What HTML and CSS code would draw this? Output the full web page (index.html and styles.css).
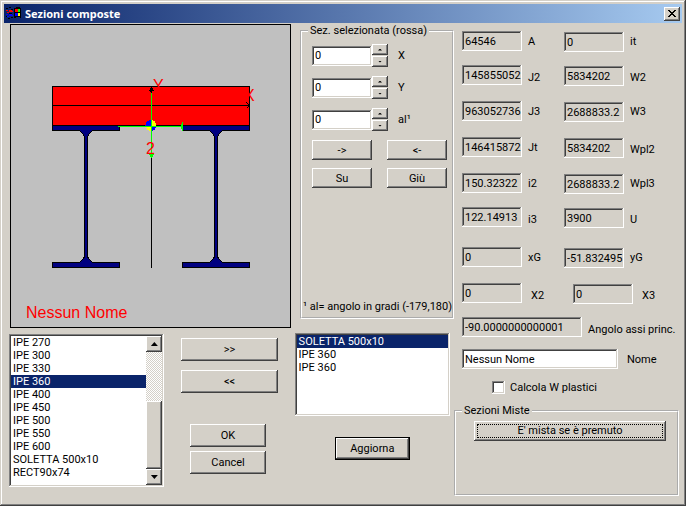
FILE: index.html
```html
<!DOCTYPE html>
<html lang="it">
<head>
<meta charset="utf-8">
<title>Sezioni composte</title>
<link rel="stylesheet" href="styles.css">
</head>
<body>
<main class="window">
  <header class="titlebar">
    <svg class="app-icon" viewBox="0 0 16 14" aria-hidden="true" shape-rendering="crispEdges">
      <path fill="#000" d="M8 1h2V0h4v1h1v10h-1v-1h-4v1H8zM0 1h2v1H0zM3 0h2v1H3zM5 2h2v1H5zM0 9h2v1H0zM2 11h2v1H2zM5 10h2v1H5zM3 6h3v1H3z"/>
      <path fill="#f00" d="M9 2h3v3H9zM0 3h2v1H0zM3 3h3v2H3zM1 5h2v1H1zM6 4h1v1H6z"/>
      <path fill="#0f0" d="M12 2h2v3h-2z"/>
      <path fill="#00f" d="M9 6h3v3H9zM0 7h2v1H0zM3 7h3v2H3zM1 9h2v1H1zM6 8h1v1H6z"/>
      <path fill="#ff0" d="M12 6h2v3h-2z"/>
    </svg>
    <h1>Sezioni composte</h1>
    <button class="close" type="button" aria-label="Chiudi">
      <svg viewBox="0 0 8 7" aria-hidden="true" shape-rendering="crispEdges"><path d="M0 0h2v1h1v1h2V1h1V0h2v1H7v1H6v1H5v1h1v1h1v1h1v1H6V6H5V5H3v1H2v1H0V6h1V5h1V4h1V3H2V2H1V1H0z"/></svg>
    </button>
  </header>

  <div class="content">
    <section class="left">
      <div class="top">
        <svg class="drawing" viewBox="10 24 281 304" role="img" aria-label="Sezione composta" shape-rendering="crispEdges">
          <rect x="10.5" y="24.5" width="280" height="303" fill="#c0c0c0" stroke="#000"/>
          <g fill="#000080" stroke="#000">
            <path id="beam" d="M52.5 125.5H119.5V130.5H92.5L88.5 134.5L87.5 137.5V256.5L88.5 258.5L92.5 262.5H119.5V267.5H52.5V262.5H79.5L83.5 258.5L84.5 256.5V137.5L83.5 134.5L79.5 130.5H52.5Z"/>
            <use href="#beam" x="130"/>
          </g>
          <rect x="52.5" y="86.5" width="197" height="39" fill="#f00" stroke="#000"/>
          <path d="M52 105.5H250M151.5 86V268M246.5 102.5l3 3l-3 3" fill="none" stroke="#000"/>
          <path d="M151 87h1l2 4h-2v1h-2v-1h-1z"/>
          <circle cx="151" cy="125.500" r="5.500" fill="#ff0"/>
          <path fill="#00f" d="M151 125.500V120A5.500 5.500 0 0 0 145.500 125.500ZM151 125.500V131A5.500 5.500 0 0 0 156.500 125.500Z"/>
          <path d="M151.500 93V157M118 126.500H183M182.500 122V131M181.500 124V129" fill="none" stroke="#0f0"/>
          <path fill="#0f0" d="M149 153h5v2h-1v2h-1v1h-1v-1h-1v-2h-1z"/>
          <g fill="#f00" class="drawing-text">
            <text x="153" y="91">Y</text>
            <text x="244" y="101">X</text>
            <text x="146" y="154">2</text>
            <text x="26" y="318">Nessun Nome</text>
          </g>
        </svg>

        <fieldset class="selected">
          <legend>Sez. selezionata (rossa)</legend>
          <div class="spin-row">
            <input class="field" id="x" type="text" value="0">
            <span class="spin"><button type="button" aria-label="Aumenta X"><i class="up"></i></button><button type="button" aria-label="Riduci X"><i class="down"></i></button></span>
            <label for="x">X</label>
          </div>
          <div class="spin-row">
            <input class="field" id="y" type="text" value="0">
            <span class="spin"><button type="button" aria-label="Aumenta Y"><i class="up"></i></button><button type="button" aria-label="Riduci Y"><i class="down"></i></button></span>
            <label for="y">Y</label>
          </div>
          <div class="spin-row">
            <input class="field" id="al" type="text" value="0">
            <span class="spin"><button type="button" aria-label="Aumenta al"><i class="up"></i></button><button type="button" aria-label="Riduci al"><i class="down"></i></button></span>
            <label for="al">al¹</label>
          </div>
          <div class="moves">
            <button class="btn" type="button">-&gt;</button>
            <button class="btn" type="button">&lt;-</button>
            <button class="btn" type="button">Su</button>
            <button class="btn" type="button">Giù</button>
          </div>
          <p class="note">¹ al= angolo in gradi (-179,180)</p>
        </fieldset>
      </div>

      <div class="bottom">
        <div class="listbox archive">
          <select size="11" aria-label="Archivio sezioni">
            <option>IPE 270</option>
            <option>IPE 300</option>
            <option>IPE 330</option>
            <option selected>IPE 360</option>
            <option>IPE 400</option>
            <option>IPE 450</option>
            <option>IPE 500</option>
            <option>IPE 550</option>
            <option>IPE 600</option>
            <option>SOLETTA 500x10</option>
            <option>RECT90x74</option>
          </select>
          <div class="scrollbar">
            <button type="button" aria-label="Su"><i class="up"></i></button>
            <span class="track"></span>
            <span class="thumb"></span>
            <button type="button" aria-label="Giù"><i class="down"></i></button>
          </div>
        </div>

        <div class="commands">
          <button class="btn tall" type="button">&gt;&gt;</button>
          <button class="btn tall" type="button">&lt;&lt;</button>
          <div class="confirm">
            <button class="btn tall" type="button">OK</button>
            <button class="btn tall" type="button">Cancel</button>
          </div>
        </div>

        <div class="composition">
          <div class="listbox parts">
            <select size="6" aria-label="Sezioni inserite">
              <option selected>SOLETTA 500x10</option>
              <option>IPE 360</option>
              <option>IPE 360</option>
            </select>
          </div>
          <button class="btn tall default" type="button">Aggiorna</button>
        </div>
      </div>
    </section>

    <section class="right">
      <div class="results">
        <div class="row">
          <input class="field" id="a" value="64546" readonly><label for="a">A</label>
          <input class="field" id="it" value="0" readonly><label for="it">it</label>
        </div>
        <div class="row">
          <input class="field" id="j2" value="145855052" readonly><label class="low" for="j2">J2</label>
          <input class="field" id="w2" value="5834202" readonly><label class="low" for="w2">W2</label>
        </div>
        <div class="row">
          <input class="field" id="j3" value="963052736" readonly><label for="j3">J3</label>
          <input class="field" id="w3" value="2688833.2" readonly><label for="w3">W3</label>
        </div>
        <div class="row">
          <input class="field" id="jt" value="146415872" readonly><label for="jt">Jt</label>
          <input class="field" id="wpl2" value="5834202" readonly><label class="low" for="wpl2">Wpl2</label>
        </div>
        <div class="row">
          <input class="field" id="i2" value="150.32322" readonly><label for="i2">i2</label>
          <input class="field" id="wpl3" value="2688833.2" readonly><label for="wpl3">Wpl3</label>
        </div>
        <div class="row">
          <input class="field" id="i3" value="122.14913" readonly><label class="low" for="i3">i3</label>
          <input class="field" id="u" value="3900" readonly><label class="low" for="u">U</label>
        </div>
        <div class="row">
          <input class="field" id="xg" value="0" readonly><label for="xg">xG</label>
          <input class="field" id="yg" value="-51.832495" readonly><label for="yg">yG</label>
        </div>
        <div class="row axes">
          <input class="field" id="x2" value="0" readonly><label class="low" for="x2">X2</label>
          <input class="field" id="x3" value="0" readonly><label class="low" for="x3">X3</label>
        </div>
        <div class="row angle">
          <input class="field" id="ang" value="-90.0000000000001" readonly><label class="low" for="ang">Angolo assi princ.</label>
        </div>
        <div class="row name">
          <input class="field" id="nome" value="Nessun Nome"><label for="nome">Nome</label>
        </div>
      </div>
      <label class="check"><input type="checkbox">Calcola W plastici</label>
      <fieldset class="mixed">
        <legend>Sezioni Miste</legend>
        <button class="btn focused" type="button"><span>E' mista se è premuto</span></button>
      </fieldset>
    </section>
  </div>
</main>
</body>
</html>
```
FILE: styles.css
```css
* {
  box-sizing: border-box;
}

body {
  margin: 0;
  background: #d4d0c8;
  color: #000;
  font: 11px/13px Roboto, "Liberation Sans", Arial, sans-serif;
}

button,
input,
select {
  margin: 0;
  border-radius: 0;
  color: inherit;
  font: inherit;
}

.window {
  min-height: 100vh;
  padding: 4px;
  background: #d4d0c8;
  box-shadow: inset -1px -1px #404040, inset 1px 1px #d4d0c8,
    inset -2px -2px #808080, inset 2px 2px #fff;
}

/* Title bar */
.titlebar {
  display: flex;
  align-items: center;
  height: 19px;
  padding: 0 2px;
  background: linear-gradient(to right, #0a246a, #a6caf0);
}

.app-icon {
  width: 16px;
  height: 14px;
}

.titlebar h1 {
  flex: 1;
  margin: 0 0 0 3px;
  color: #fff;
  font: bold 11px/19px "Noto Sans", Tahoma, sans-serif;
}

.close {
  display: grid;
  place-items: center;
  width: 16px;
  height: 14px;
  padding: 0;
}

.close svg {
  width: 8px;
  height: 7px;
}

/* Raised and sunken edges */
.btn,
.close,
.spin button,
.scrollbar button,
.thumb {
  border: 0;
  background: #d4d0c8;
  box-shadow: inset -1px -1px #404040, inset 1px 1px #fff,
    inset -2px -2px #808080;
}

.btn {
  height: 20px;
  padding: 0;
  text-align: center;
}

.btn.tall {
  height: 23px;
}

.field,
.listbox {
  border: 0;
  box-shadow: inset -1px -1px #fff, inset 1px 1px #808080,
    inset -2px -2px #d4d0c8, inset 2px 2px #404040;
}

.field {
  width: 100%;
  min-width: 0;
  height: 20px;
  padding: 0 1px 0 3px;
  background: #fff;
}

.field:read-only {
  background: #d4d0c8;
}

.up,
.down {
  display: block;
  width: 7px;
  height: 4px;
  background: #000;
  clip-path: polygon(50% 0, 100% 100%, 0 100%);
}

.down {
  clip-path: polygon(0 0, 100% 0, 50% 100%);
}

fieldset {
  min-width: 0;
  margin: 0;
  padding: 0;
  border: 2px groove #fff;
}

legend {
  padding: 0 2px;
}

/* Page regions */
.content {
  display: grid;
  grid-template-columns: 445fr 225fr;
  padding: 1px 3px 0 5px;
}

.top {
  display: grid;
  grid-template-columns: 281fr 154fr;
  column-gap: 9px;
  padding-left: 1px;
}

.drawing {
  display: block;
  width: 100%;
}

.drawing-text {
  font: 16px "Liberation Sans", Arial, sans-serif;
}

.selected {
  display: flex;
  flex-direction: column;
  margin-bottom: 9px;
  padding: 7px 5px 4px 10px;
}

.selected legend {
  margin-left: -4px;
}

.spin-row {
  display: grid;
  grid-template-columns: 60px 16px 1fr;
  align-items: center;
  height: 23px;
  margin-bottom: 9px;
}

.spin-row label {
  padding-left: 10px;
}

.spin {
  display: grid;
  gap: 1px;
}

.spin button,
.scrollbar button {
  display: grid;
  place-items: center;
  padding: 0;
}

.spin button {
  height: 11px;
}

.spin i {
  width: 4px;
  height: 2px;
}

.moves {
  display: grid;
  grid-template-columns: 1fr 1fr;
  gap: 8px 15px;
}

.note {
  margin: auto 0 0 -9px;
  white-space: nowrap;
}

.bottom {
  display: grid;
  grid-template-columns: 155fr 96fr 155fr;
  column-gap: 17px;
  padding: 5px 4px 0 0;
}

/* List boxes */
.listbox {
  display: flex;
  padding: 2px;
  background: #fff;
}

.archive {
  height: 153px;
  margin-top: 1px;
}

.parts {
  height: 83px;
}

.listbox select {
  flex: 1;
  min-width: 0;
  padding: 0;
  border: 0;
  outline: 0;
  background: transparent;
  overflow: hidden;
}

.listbox option {
  height: 13px;
  min-height: 13px;
  padding: 0 2px;
  line-height: 13px;
}

.listbox option:checked {
  background: linear-gradient(#0a246a, #0a246a);
  -webkit-text-fill-color: #fff;
}

.scrollbar {
  display: flex;
  flex-direction: column;
  width: 16px;
}

.scrollbar button {
  height: 16px;
}

.track {
  flex: 49;
  background: repeating-conic-gradient(#fff 0 25%, #d4d0c8 0 50%) 0 0 / 2px 2px;
}

.thumb {
  flex: 68;
}

.commands {
  display: flex;
  flex-direction: column;
  gap: 9px;
  padding-top: 5px;
}

.confirm {
  display: grid;
  gap: 4px;
  margin-top: 22px;
  padding: 0 12px 0 9px;
}

.composition {
  display: grid;
  align-content: start;
  row-gap: 21px;
}

.default {
  justify-self: center;
  width: 75px;
  box-shadow: inset 0 0 0 1px #000, inset -2px -2px #404040,
    inset 2px 2px #fff, inset -3px -3px #808080;
}

/* Results */
.right {
  display: flex;
  flex-direction: column;
}

.results {
  display: grid;
  grid-template-rows: 34px 36px 36px 36px 34px 40px 36px 34px 32px 20px;
  padding: 7px 0 0 8px;
}

.row {
  display: grid;
  grid-template-columns: 60fr 42fr 60fr 55fr;
  align-items: start;
}

.row label {
  padding-left: 6px;
  line-height: 22px;
  white-space: nowrap;
}

.row .low {
  padding-top: 2px;
}

.row .field:nth-of-type(2) {
  margin-top: 1px;
}

.row.axes {
  grid-template-columns: 60fr 51fr 60fr 46fr;
}

.row.angle {
  grid-template-columns: 120fr 97fr;
}

.row.name {
  grid-template-columns: 156fr 61fr;
}

.axes label,
.name label {
  padding-left: 9px;
}

.check {
  display: flex;
  align-items: center;
  gap: 5px;
  margin: 12px 0 10px 38px;
}

.check input {
  appearance: none;
  width: 13px;
  height: 13px;
  background: #fff;
  box-shadow: inset -1px -1px #fff, inset 1px 1px #808080,
    inset -2px -2px #d4d0c8, inset 2px 2px #404040;
}

.check input:checked {
  background: #000;
}

.mixed {
  height: 92px;
  padding: 4px 11px 0 18px;
}

.mixed legend {
  margin-left: -12px;
}

.mixed .btn {
  display: block;
  width: 100%;
  padding: 3px;
}

.focused span {
  display: block;
  border: 1px dotted #000;
  line-height: 12px;
}
```
